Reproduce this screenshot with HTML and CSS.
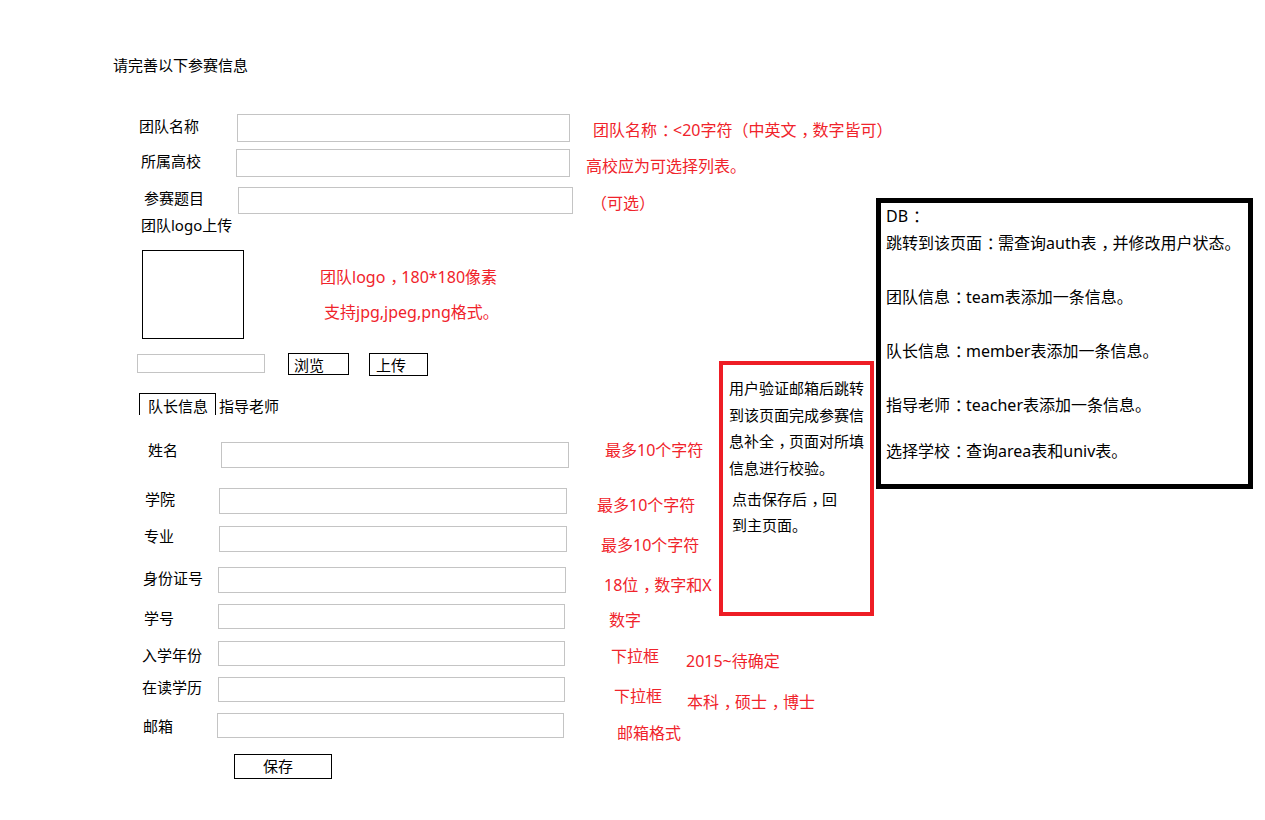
FILE: index.html
```html
<!DOCTYPE html>
<html lang="zh-CN">
<head>
<meta charset="utf-8">
<title>请完善以下参赛信息</title>
<link rel="stylesheet" href="styles.css">
</head>
<body>
<div class="page">
  <div class="title">请完善以下参赛信息</div>

  <div class="row r-team"><span class="lbl">团队名称</span><div class="field"></div><span class="note">团队名称<span class="fw">：</span>&lt;20字符（中英文<span class="fw">，</span>数字皆可）</span></div>
  <div class="row r-school"><span class="lbl">所属高校</span><div class="field"></div><span class="note">高校应为可选择列表。</span></div>
  <div class="row r-topic"><span class="lbl">参赛题目</span><div class="field"></div><span class="note">（可选）</span></div>

  <div class="logo-label">团队logo上传</div>
  <div class="logo-row">
    <div class="logo-box"></div>
    <div class="logo-notes">
      <p class="note">团队logo<span class="fw">，</span>180*180像素</p>
      <p class="note note-b">支持jpg,jpeg,png格式。</p>
    </div>
  </div>

  <div class="upload-row">
    <div class="file-field"></div>
    <div class="btn btn-browse">浏览</div>
    <div class="btn btn-upload">上传</div>
  </div>

  <div class="tabs">
    <div class="tab tab-active">队长信息</div>
    <div class="tab">指导老师</div>
  </div>

  <div class="row r-name"><span class="lbl">姓名</span><div class="field"></div><span class="note">最多10个字符</span></div>
  <div class="row r-college"><span class="lbl">学院</span><div class="field"></div><span class="note">最多10个字符</span></div>
  <div class="row r-major"><span class="lbl">专业</span><div class="field"></div><span class="note">最多10个字符</span></div>
  <div class="row r-id"><span class="lbl">身份证号</span><div class="field"></div><span class="note">18位<span class="fw">，</span>数字和X</span></div>
  <div class="row r-sno"><span class="lbl">学号</span><div class="field"></div><span class="note">数字</span></div>
  <div class="row r-year"><span class="lbl">入学年份</span><div class="field"></div><span class="note">下拉框</span><span class="note note2">2015~待确定</span></div>
  <div class="row r-degree"><span class="lbl">在读学历</span><div class="field"></div><span class="note">下拉框</span><span class="note note2">本科<span class="fw">，</span>硕士<span class="fw">，</span>博士</span></div>
  <div class="row r-mail"><span class="lbl">邮箱</span><div class="field"></div><span class="note">邮箱格式</span></div>

  <div class="save">保存</div>

  <aside class="memo">
    <p>用户验证邮箱后跳转<br>到该页面完成参赛信<br>息补全<span class="fw">，</span>页面对所填<br>信息进行校验。</p>
    <p class="memo-b">点击保存后<span class="fw">，</span>回<br>到主页面。</p>
  </aside>

  <aside class="db">
    <p>DB<span class="fw">：</span></p>
    <p>跳转到该页面<span class="fw">：</span>需查询auth表<span class="fw">，</span>并修改用户状态。</p>
    <p class="gap">团队信息<span class="fw">：</span>team表添加一条信息。</p>
    <p class="gap">队长信息<span class="fw">：</span>member表添加一条信息。</p>
    <p class="gap">指导老师<span class="fw">：</span>teacher表添加一条信息。</p>
    <p class="gap-s">选择学校<span class="fw">：</span>查询area表和univ表。</p>
  </aside>
</div>
</body>
</html>
```

FILE: styles.css
```css
html, body {
  margin: 0;
  padding: 0;
  background: #ffffff;
}

body {
  font-family: "Noto Sans", "Noto Sans CJK SC", sans-serif;
  color: #000000;
  font-size: 15px;
}

p {
  margin: 0;
}

/* full-width colon / comma drawn centred in their cell */
.fw {
  font-feature-settings: "halt" 1;
  padding: 0 0.2em 0 0.3em;
}

.page {
  position: relative;
  width: 1265px;
  height: 820px;
  overflow: hidden;
  padding-top: 55px;
  box-sizing: border-box;
}

.title {
  margin-left: 113px;
  font-size: 15px;
  line-height: 20px;
}

/* form rows */
.row {
  display: flex;
  align-items: flex-start;
  height: var(--ih);
  margin-top: var(--mt);
}

.lbl {
  flex: none;
  margin-left: var(--lx);
  width: calc(var(--ix) - var(--lx));
  margin-top: var(--ly);
  font-size: 15px;
  line-height: 20px;
  white-space: nowrap;
}

.field {
  flex: none;
  width: var(--iw);
  height: var(--ih);
  border: 1px solid #c4c4c4;
  box-sizing: border-box;
  background: #ffffff;
}

.note {
  flex: none;
  color: #f0232b;
  font-size: 16px;
  line-height: 22px;
  white-space: nowrap;
}

.row .note {
  margin-left: var(--nx);
  margin-top: var(--ny);
}

.row .note2 {
  margin-left: var(--nx2);
  margin-top: var(--ny2);
}

.r-team    { --mt: 39px; --lx: 139px; --ix: 237px; --iw: 333px; --ih: 28px; --ly: 2px;  --nx: 23px; --ny: 5px; }
.r-school  { --mt: 7px;  --lx: 141px; --ix: 236px; --iw: 334px; --ih: 28px; --ly: 2px;  --nx: 16px; --ny: 6px; }
.r-topic   { --mt: 10px; --lx: 144px; --ix: 238px; --iw: 335px; --ih: 27px; --ly: 1px;  --nx: 18px; --ny: 5px; }

.r-name    { --mt: 27px; --lx: 148px; --ix: 221px; --iw: 348px; --ih: 26px; --ly: -2px; --nx: 36px; --ny: -3px; }
.r-college { --mt: 20px; --lx: 145px; --ix: 219px; --iw: 348px; --ih: 26px; --ly: 1px;  --nx: 30px; --ny: 6px; }
.r-major   { --mt: 12px; --lx: 144px; --ix: 219px; --iw: 348px; --ih: 26px; --ly: 0px;  --nx: 34px; --ny: 8px; }
.r-id      { --mt: 15px; --lx: 143px; --ix: 218px; --iw: 348px; --ih: 26px; --ly: 1px;  --nx: 38px; --ny: 7px; }
.r-sno     { --mt: 11px; --lx: 144px; --ix: 218px; --iw: 347px; --ih: 25px; --ly: 4px;  --nx: 44px; --ny: 5px; }
.r-year    { --mt: 12px; --lx: 142px; --ix: 218px; --iw: 347px; --ih: 25px; --ly: 4px;  --nx: 46px; --ny: 4px; --nx2: 27px; --ny2: 9px; }
.r-degree  { --mt: 11px; --lx: 142px; --ix: 218px; --iw: 347px; --ih: 25px; --ly: 0px;  --nx: 49px; --ny: 8px; --nx2: 25px; --ny2: 14px; }
.r-mail    { --mt: 11px; --lx: 143px; --ix: 217px; --iw: 347px; --ih: 25px; --ly: 3px;  --nx: 53px; --ny: 9px; }

/* logo */
.logo-label {
  margin-top: 1px;
  margin-left: 141px;
  line-height: 20px;
}

.logo-row {
  display: flex;
  align-items: flex-start;
  margin-top: 15px;
  margin-left: 142px;
}

.logo-box {
  flex: none;
  width: 102px;
  height: 89px;
  border: 1px solid #000000;
  box-sizing: border-box;
}

.logo-notes {
  margin-left: 76px;
  padding-top: 16px;
}

.logo-notes .note-b {
  margin-top: 13px;
  margin-left: 4px;
}

/* upload */
.upload-row {
  display: flex;
  align-items: flex-start;
  margin-top: 14px;
  margin-left: 137px;
  height: 23px;
}

.file-field {
  flex: none;
  margin-top: 1px;
  width: 128px;
  height: 19px;
  border: 1px solid #c4c4c4;
  box-sizing: border-box;
}

.btn {
  flex: none;
  border: 1px solid #000000;
  box-sizing: border-box;
  line-height: 19px;
  padding-top: 2px;
}

.btn-browse {
  margin-left: 23px;
  width: 61px;
  height: 22px;
  padding-left: 5px;
}

.btn-upload {
  margin-left: 20px;
  width: 59px;
  height: 23px;
  padding-left: 6px;
}

/* tabs */
.tabs {
  display: flex;
  margin-top: 17px;
  margin-left: 139px;
  height: 22px;
}

.tab {
  flex: none;
  height: 22px;
  box-sizing: border-box;
  padding-top: 4px;
  line-height: 18px;
  margin-left: 3px;
}

.tab-active {
  width: 77px;
  margin-left: 0;
  padding-top: 3px;
  padding-left: 8px;
  border: 1px solid #000000;
  border-bottom: none;
}

/* save */
.save {
  margin-top: 16px;
  margin-left: 234px;
  width: 98px;
  height: 25px;
  border: 1px solid #000000;
  box-sizing: border-box;
  padding-right: 10px;
  text-align: center;
  line-height: 23px;
}

/* annotation boxes on the canvas */
.memo {
  position: absolute;
  left: 719px;
  top: 361px;
  width: 155px;
  height: 255px;
  border: 4px solid #ee1d25;
  box-sizing: border-box;
  padding: 10px 0 0 6px;
  font-size: 15px;
  line-height: 26.5px;
}

.memo .memo-b {
  margin-top: 5px;
  padding-left: 3px;
  line-height: 26px;
}

.db {
  position: absolute;
  left: 876px;
  top: 198px;
  width: 377px;
  height: 291px;
  border: 5px solid #000000;
  box-sizing: border-box;
  padding: 0 0 0 5px;
  font-size: 16px;
  line-height: 27px;
}

.db .gap {
  margin-top: 27px;
}

.db .gap-s {
  margin-top: 19px;
}
```
